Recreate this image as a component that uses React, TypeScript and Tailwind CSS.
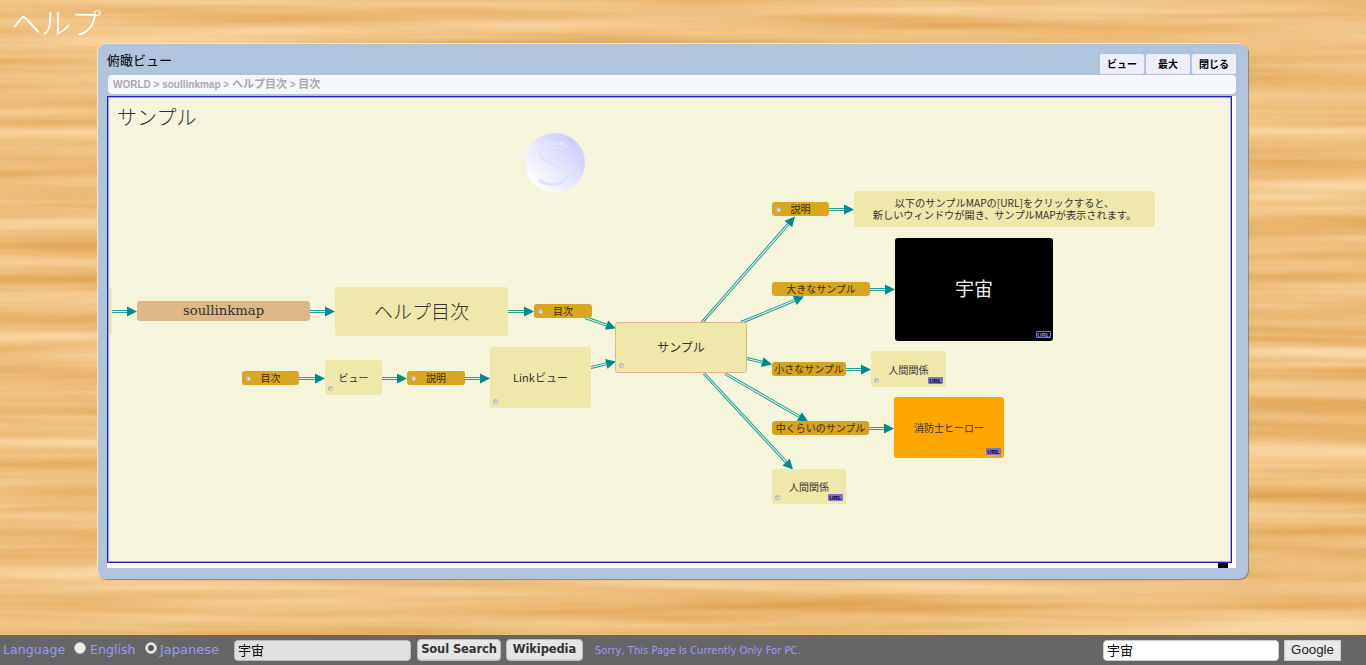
import type { ReactNode } from 'react'

const EDGES = [
  [112, 311, 137, 311],
  [310, 311, 335, 311],
  [508, 311, 534, 311],
  [585, 317, 616, 328],
  [591, 367, 616, 361],
  [299, 378, 325, 378],
  [382, 378, 407, 378],
  [465, 378, 490, 378],
  [702, 322, 795, 216],
  [741, 322, 804, 296],
  [747, 358, 772, 364],
  [725, 373, 808, 421],
  [704, 373, 793, 469],
  [829, 209, 854, 209],
  [870, 289, 895, 289],
  [846, 369, 871, 369],
  [869, 428, 894, 428],
]

function Edge({ edge }: { edge: number[] }) {
  const [x1, y1, x2, y2] = edge
  const len = Math.hypot(x2 - x1, y2 - y1)
  const ux = (x2 - x1) / len
  const uy = (y2 - y1) / len
  const bx = x2 - ux * 10
  const by = y2 - uy * 10
  const head = `${x2},${y2 + 0.5} ${bx - uy * 5},${by + ux * 5 + 0.5} ${bx + uy * 5},${by - ux * 5 + 0.5}`
  return (
    <g>
      <line x1={x1} y1={y1 + 0.5} x2={bx} y2={by + 0.5} stroke="#1c9a96" strokeWidth="3" />
      <line x1={x1} y1={y1 + 0.5} x2={bx} y2={by + 0.5} stroke="#f0f6e8" strokeWidth="1.1" />
      <polygon points={head} fill="#008b8b" />
    </g>
  )
}

function Dot({ className }: { className: string }) {
  return (
    <span className={`absolute flex h-[5px] w-[5px] items-center justify-center rounded-full bg-[#bdbdbd] ${className}`}>
      <span className="h-[2px] w-[2px] rounded-full bg-[#eeeeee]" />
    </span>
  )
}

function Tag({ className, children, dot }: { className: string; children: ReactNode; dot?: boolean }) {
  return (
    <div className={`absolute flex h-[14px] items-center justify-center rounded-[3px] bg-[#daa520] text-[10px] leading-none text-[#3a2c00] ${className}`}>
      {dot && <Dot className="left-[4px] top-[5px]" />}
      {children}
    </div>
  )
}

function Box({ className, children, dot }: { className: string; children: ReactNode; dot?: boolean }) {
  return (
    <div className={`absolute flex items-center justify-center rounded-[3px] bg-[#eee8aa] text-[#333333] ${className}`}>
      {dot && <Dot className="bottom-[4px] left-[3px]" />}
      {children}
    </div>
  )
}

function UrlBadge({ className }: { className: string }) {
  return (
    <span className={`absolute flex h-[7px] w-[15px] items-center justify-center rounded-[1px] bg-[#7b72d8] font-['Liberation_Sans',sans-serif] text-[6px] font-bold leading-none text-black ${className}`}>
      URL
    </span>
  )
}

function MapCanvas() {
  return (
    <div className="h-[467px] w-[1125px] border border-[#2222c0] bg-[#f5f5dc] p-px shadow-[inset_0_0_0_1px_#a0a0dc]">
      <div className="relative h-full w-full overflow-hidden">
        <svg className="absolute left-0 top-0" width="1121" height="463" viewBox="109 98 1121 463">
          {EDGES.map((edge) => (
            <Edge key={edge.join('-')} edge={edge} />
          ))}
        </svg>

        <div className="absolute left-[8px] top-[5px] text-[20px] font-light leading-[28px] text-[#333333]">サンプル</div>

        <div className="absolute left-[416px] top-[35px] h-[60px] w-[60px] rounded-full bg-[linear-gradient(225deg,#c8c8ff_8%,#e6e6ff_50%,#ffffff_88%)]">
          <svg width="60" height="60" viewBox="0 0 60 60" fill="none">
            <path
              d="M42 14C34 8 20 9 16 17C13 25 22 28 28 31C36 35 44 38 41 45C37 53 22 53 14 47"
              stroke="#e2e4fb"
              strokeWidth="3"
            />
            <path
              d="M38 17C32 13 24 14 22 19C21 24 27 26 33 29C41 33 47 38 45 44"
              stroke="#e2e4fb"
              strokeWidth="1.5"
            />
          </svg>
        </div>

        <div className="absolute left-0 top-[190px] h-[47px] w-[3px] bg-[#eee8aa]" />

        <div className="absolute left-[28px] top-[203px] flex h-[20px] w-[173px] items-center justify-center rounded-[3px] bg-[#deb887] font-['DejaVu_Serif',serif] text-[13.2px] leading-none text-[#333333]">
          soullinkmap
        </div>
        <Box className="left-[226px] top-[189px] h-[49px] w-[173px] text-[19px] font-light">ヘルプ目次</Box>
        <Tag className="left-[425px] top-[206px] w-[58px]" dot>目次</Tag>
        <Box className="left-[506px] top-[224px] h-[51px] w-[132px] border border-[#deb887] pb-[2px] text-[12px]" dot>サンプル</Box>

        <Tag className="left-[133px] top-[273px] w-[57px]" dot>目次</Tag>
        <Box className="left-[216px] top-[262px] h-[35px] w-[57px] text-[10px]" dot>ビュー</Box>
        <Tag className="left-[298px] top-[273px] w-[58px]" dot>説明</Tag>
        <Box className="left-[381px] top-[249px] h-[61px] w-[101px] text-[11px]" dot>Linkビュー</Box>

        <Tag className="left-[663px] top-[104px] w-[57px]" dot>説明</Tag>
        <Box className="left-[745px] top-[93px] h-[36px] w-[301px] text-center text-[10.2px] leading-[12px]">
          以下のサンプルMAPの[URL]をクリックすると、
          <br />
          新しいウィンドウが開き、サンプルMAPが表示されます。
        </Box>

        <Tag className="left-[663px] top-[184px] w-[98px]">大きなサンプル</Tag>
        <div className="absolute left-[786px] top-[140px] flex h-[103px] w-[158px] items-center justify-center rounded-[3px] bg-black pb-[2px] text-[19px] text-[#eeeeee]">
          宇宙
          <UrlBadge className="bottom-[3px] right-[2px] border border-[#7b72ff] !bg-black !text-[#9a94ff]" />
        </div>

        <Tag className="left-[663px] top-[264px] w-[74px] !bg-[#d6a222]">小さなサンプル</Tag>
        <Box className="left-[762px] top-[253px] h-[36px] w-[75px] text-[10px]" dot>
          人間関係
          <UrlBadge className="bottom-[3px] right-[3px]" />
        </Box>

        <Tag className="left-[663px] top-[323px] w-[97px] !bg-[#d6a222]">中くらいのサンプル</Tag>
        <div className="absolute left-[785px] top-[299px] flex h-[61px] w-[110px] items-center justify-center rounded-[3px] bg-[#ffa500] text-[10px] text-[#333333]">
          消防士ヒーロー
          <UrlBadge className="bottom-[3px] right-[3px]" />
        </div>

        <Box className="left-[663px] top-[371px] h-[35px] w-[74px] text-[10px]" dot>
          人間関係
          <UrlBadge className="bottom-[3px] right-[3px]" />
        </Box>
      </div>
    </div>
  )
}

function WindowButton({ children }: { children: ReactNode }) {
  return (
    <button className="h-[20px] w-[44px] rounded-[2px] bg-[#eeeef8] text-[10px] font-bold leading-none text-black">
      {children}
    </button>
  )
}

function BirdsEyeWindow() {
  return (
    <section className="ml-[97px] flex h-[536px] w-[1151px] flex-col rounded-[9px] border-l border-t border-[#f5e6b8] bg-[#b0c4de] pl-[9px] shadow-[1px_1px_1px_#8a8a80]">
      <div className="flex h-[31px] items-start justify-between pr-[12px]">
        <h2 className="pt-[8px] text-[13px] font-normal leading-[16px] text-black">俯瞰ビュー</h2>
        <div className="flex gap-[2px] pt-[10px]">
          <WindowButton>ビュー</WindowButton>
          <WindowButton>最大</WindowButton>
          <WindowButton>閉じる</WindowButton>
        </div>
      </div>
      <div className="ml-[1px] flex h-[19px] w-[1128px] items-center rounded-[4px] bg-[#f6f6ff] pl-[5px] font-['Liberation_Sans','Noto_Sans_CJK_JP',sans-serif] text-[10px] font-bold text-[#aaaaaa]">
        <span>
          WORLD &gt; soullinkmap &gt; <span className="text-[11px]">ヘルプ目次</span> &gt; <span className="text-[11px]">目次</span>
        </span>
      </div>
      <div className="relative mt-[2px] h-[472px] w-[1129px] bg-white">
        <MapCanvas />
        <div className="absolute left-[1111px] top-[467px] h-[5px] w-[10px] bg-black" />
      </div>
    </section>
  )
}

function Radio({ checked }: { checked?: boolean }) {
  return (
    <span className="flex h-[12px] w-[12px] -translate-y-[2px] items-center justify-center rounded-full border border-[#bbbbbb] bg-[#eeeeee]">
      {checked && <span className="h-[6px] w-[6px] rounded-full bg-[#555555]" />}
    </span>
  )
}

const FOOTER_BUTTON =
  "h-[22px] rounded-[4px] border border-[#bbbbbb] bg-[#e6e6e6] text-[11.5px] font-bold leading-none tracking-[-0.1px] text-[#333333] shadow-[inset_0_-1px_1px_#cfcfcf]"

function FooterBar() {
  return (
    <footer className="flex h-[30px] items-center bg-[#666666] font-['DejaVu_Sans',sans-serif] text-[13px] text-[#9999ee]">
      <span className="ml-[3px] w-[71px] text-[12.6px]">Language</span>
      <Radio />
      <span className="ml-[4px] w-[55px] text-[12.6px]">English</span>
      <Radio checked />
      <span className="ml-[3px] w-[74px]">Japanese</span>
      <div className="flex h-[21px] w-[177px] items-center rounded-[4px] border border-[#bbbbbb] bg-[#e0e0e0] pl-[3px] font-['Noto_Sans_CJK_JP',sans-serif] text-[13px] text-black">
        宇宙
      </div>
      <button className={`ml-[6px] w-[84px] ${FOOTER_BUTTON}`}>Soul Search</button>
      <button className={`ml-[5px] w-[77px] ${FOOTER_BUTTON}`}>Wikipedia</button>
      <span className="ml-[12px] w-[508px] text-[10px]">Sorry, This Page Is Currently Only For PC.</span>
      <div className="flex h-[21px] w-[176px] items-center rounded-[4px] border border-[#cccccc] bg-white pl-[3px] font-['Noto_Sans_CJK_JP',sans-serif] text-[13px] text-black">
        宇宙
      </div>
      <button className="ml-[5px] h-[21px] w-[57px] border border-[#cccccc] bg-[#e9e9e9] font-['Liberation_Sans',sans-serif] text-[13.3px] leading-none text-[#222222]">
        Google
      </button>
    </footer>
  )
}

// wood grain for the page background
function WoodTexture() {
  return (
    <svg className="absolute left-0 top-0" width="1366" height="665">
      <filter id="wood" x="0" y="0" width="100%" height="100%" colorInterpolationFilters="sRGB">
        <feTurbulence type="fractalNoise" baseFrequency="0.002 0.055" numOctaves="3" seed="7" />
        <feColorMatrix values="0.16 0 0 0 0.85  0.3 0 0 0 0.6  0.46 0 0 0 0.26  0 0 0 0 1" />
      </filter>
      <rect width="1366" height="665" filter="url(#wood)" />
    </svg>
  )
}

export default function App() {
  return (
    <div className="relative h-[665px] w-[1366px] overflow-hidden bg-[#ebbd7e] font-['Noto_Sans_CJK_JP','Liberation_Sans',sans-serif]">
      <WoodTexture />
      <div className="relative flex h-full flex-col">
        <header className="h-[43px] pl-[11px] text-[30px] font-light leading-[42px] text-white">ヘルプ</header>
        <BirdsEyeWindow />
        <div className="flex-1" />
        <FooterBar />
      </div>
    </div>
  )
}
